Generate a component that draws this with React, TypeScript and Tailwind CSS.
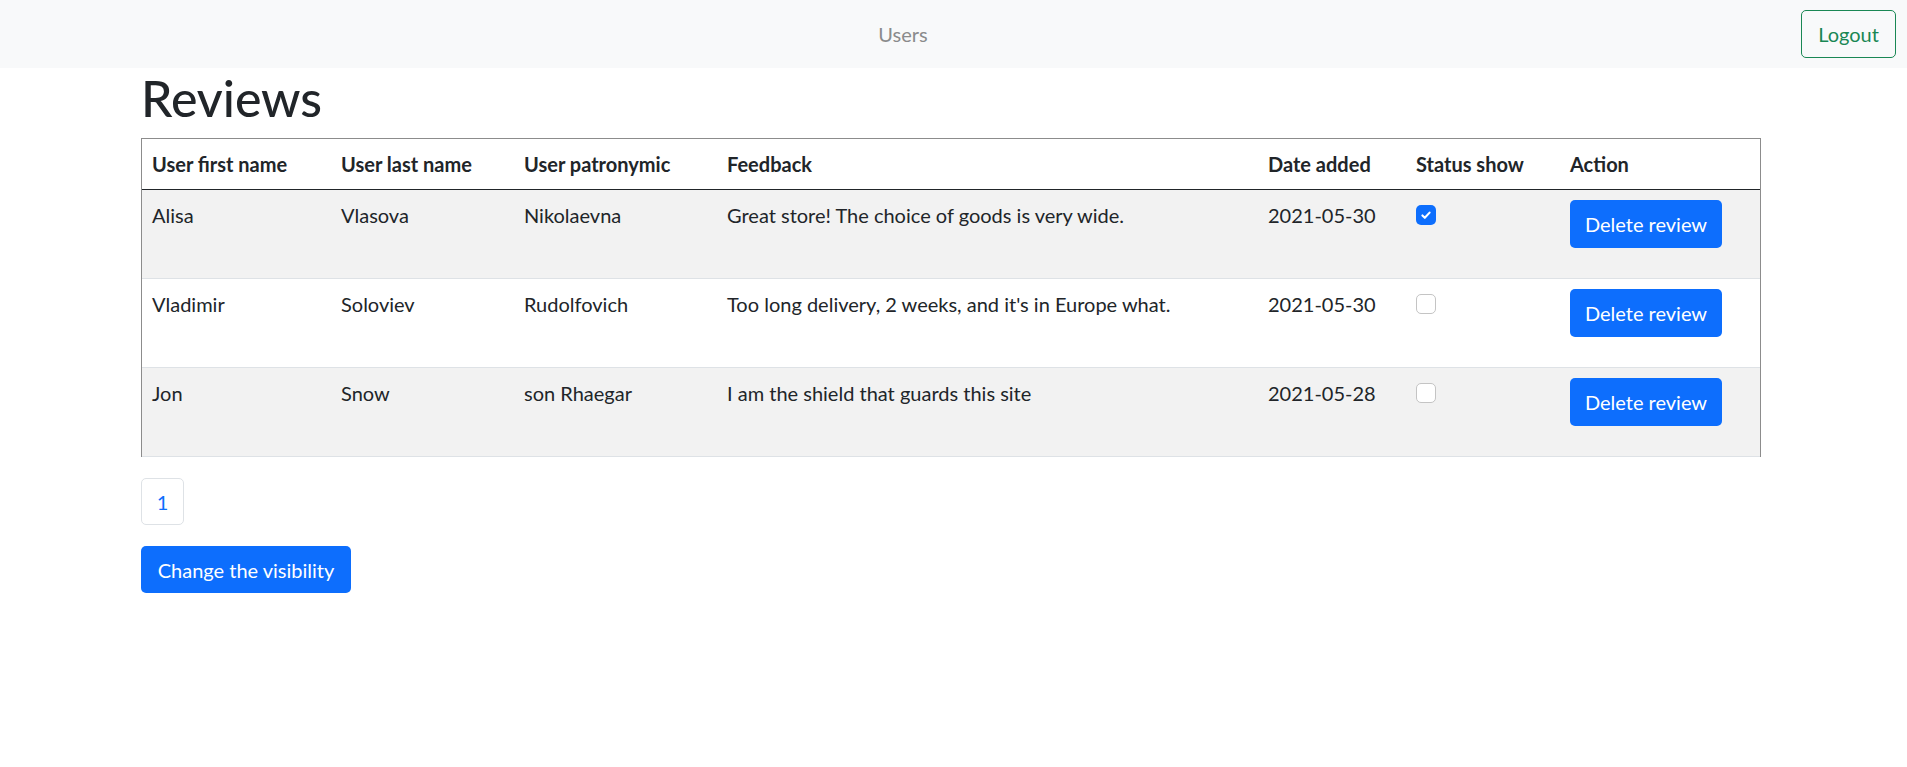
import React from "react";

type Review = {
  first: string;
  last: string;
  patronymic: string;
  feedback: string;
  date: string;
  shown: boolean;
};

const reviews: Review[] = [
  {
    first: "Alisa",
    last: "Vlasova",
    patronymic: "Nikolaevna",
    feedback: "Great store! The choice of goods is very wide.",
    date: "2021-05-30",
    shown: true,
  },
  {
    first: "Vladimir",
    last: "Soloviev",
    patronymic: "Rudolfovich",
    feedback: "Too long delivery, 2 weeks, and it's in Europe what.",
    date: "2021-05-30",
    shown: false,
  },
  {
    first: "Jon",
    last: "Snow",
    patronymic: "son Rhaegar",
    feedback: "I am the shield that guards this site",
    date: "2021-05-28",
    shown: false,
  },
];

const headers = [
  "User first name",
  "User last name",
  "User patronymic",
  "Feedback",
  "Date added",
  "Status show",
  "Action",
];

// column widths measured off the screenshot (table inner width 1618)
const widths = ["w-[189px]", "w-[183px]", "w-[203px]", "w-[541px]", "w-[148px]", "w-[154px]", "w-[200px]"];

const Checkbox = ({ checked }: { checked: boolean }) =>
  checked ? (
    <span className="mt-[5px] flex h-5 w-5 items-center justify-center rounded-[5px] bg-[#0d6efd]">
      <svg viewBox="0 0 20 20" className="h-4 w-4">
        <path
          d="M5.5 10.5l3 3l6-6.5"
          fill="none"
          stroke="#fff"
          strokeWidth="2.6"
          strokeLinecap="round"
          strokeLinejoin="round"
        />
      </svg>
    </span>
  ) : (
    <span className="mt-[5px] block h-5 w-5 rounded-[5px] border border-[#c4c4c4] bg-white" />
  );

export default function App() {
  return (
    <div className="min-h-screen bg-white text-[20px] leading-[30px] text-[#212529] [font-family:Lato,'Noto_Sans',sans-serif]">
      <nav className="flex h-[68px] items-center bg-[#f8f9fa]">
        <div className="flex flex-1 justify-center pl-[5px]">
          <a className="px-[10px] py-[10px] text-[#8a8b8c]">Users</a>
        </div>
        <button className="mr-[11px] h-[48px] w-[95px] rounded-[5px] border border-[#198754] text-[#198754]">
          Logout
        </button>
      </nav>

      <div className="ml-[141px] w-[1620px]">
        <h1 className="mb-[10px] text-[50px] font-medium leading-[60px]">Reviews</h1>

        <div className="border-x border-t border-[#8c8c8c]">
          <table className="w-full table-fixed border-collapse">
            <thead>
              <tr>
                {headers.map((h, i) => (
                  <th
                    key={h}
                    className={`${widths[i]} border-b border-[#212529] px-[10px] py-[10px] text-left font-bold`}
                  >
                    {h}
                  </th>
                ))}
              </tr>
            </thead>
            <tbody>
              {reviews.map((r, i) => (
                <tr key={i} className={i % 2 === 0 ? "bg-[#f2f2f2]" : "bg-white"}>
                  <td className="h-[89px] border-b border-[#dee2e6] px-[10px] pt-[10px] align-top">{r.first}</td>
                  <td className="border-b border-[#dee2e6] px-[10px] pt-[10px] align-top">{r.last}</td>
                  <td className="border-b border-[#dee2e6] px-[10px] pt-[10px] align-top">{r.patronymic}</td>
                  <td className="border-b border-[#dee2e6] px-[10px] pt-[10px] align-top">{r.feedback}</td>
                  <td className="border-b border-[#dee2e6] px-[10px] pt-[10px] align-top">{r.date}</td>
                  <td className="border-b border-[#dee2e6] px-[10px] pt-[10px] align-top">
                    <Checkbox checked={r.shown} />
                  </td>
                  <td className="border-b border-[#dee2e6] px-[10px] pt-[10px] align-top">
                    <button className="h-[48px] w-[152px] rounded-[5px] bg-[#0d6efd] text-white">
                      Delete review
                    </button>
                  </td>
                </tr>
              ))}
            </tbody>
          </table>
        </div>

        <div className="mt-[21px] flex">
          <a className="flex h-[47px] w-[43px] items-center justify-center rounded-[5px] border border-[#dee2e6] text-[#0d6efd]">
            1
          </a>
        </div>

        <button className="mt-[21px] h-[47px] w-[210px] rounded-[5px] bg-[#0d6efd] text-white">
          Change the visibility
        </button>
      </div>
    </div>
  );
}
